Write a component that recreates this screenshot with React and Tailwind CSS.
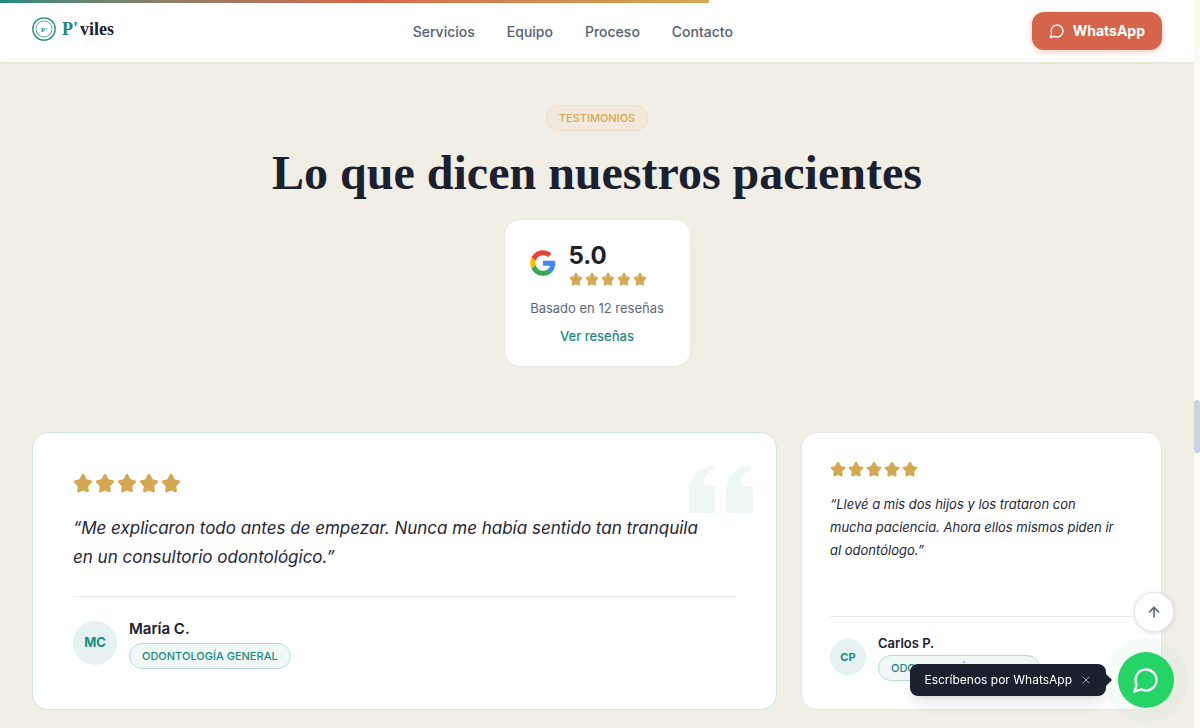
import React from "react";
import { ArrowUp, X } from "lucide-react";

const NAV = [
  { label: "Servicios", href: "#servicios" },
  { label: "Equipo", href: "#equipo" },
  { label: "Proceso", href: "#proceso" },
  { label: "Contacto", href: "#contacto" },
];

function ChatIcon({ className }) {
  return (
    <svg viewBox="0 0 24 24" fill="none" stroke="currentColor" strokeWidth="2" strokeLinecap="round" strokeLinejoin="round" className={className} aria-hidden="true">
      <path d="M7.9 20A9 9 0 1 0 4 16.1L2 22Z" />
    </svg>
  );
}

function Stars({ size }) {
  return (
    <div role="img" aria-label="5 de 5 estrellas" className="flex gap-0.5 text-[#d4a853]">
      {[0, 1, 2, 3, 4].map((n) => (
        <svg key={n} viewBox="0 0 24 24" fill="currentColor" stroke="currentColor" strokeWidth="2" strokeLinecap="round" strokeLinejoin="round" className={size} aria-hidden="true">
          <path d="M11.525 2.295a.53.53 0 0 1 .95 0l2.81 5.4a2.123 2.123 0 0 0 1.595 1.16l4.666.8a.53.53 0 0 1 .294.904l-3.9 4.2a2.123 2.123 0 0 0-.611 1.878l.682 4.95a.53.53 0 0 1-.771.56l-4.318-1.8a2.122 2.122 0 0 0-1.973 0L6.696 22.2a.53.53 0 0 1-.77-.56l.681-4.95a2.122 2.122 0 0 0-.611-1.879l-3.836-4.252a.53.53 0 0 1 .294-.906l4.597-.798a2.122 2.122 0 0 0 1.598-1.16z" />
        </svg>
      ))}
    </div>
  );
}

function GoogleLogo() {
  return (
    <svg viewBox="0 0 24 24" className="size-7 shrink-0" aria-hidden="true">
      <path fill="#4285F4" d="M22.56 12.25c0-.78-.07-1.53-.2-2.25H12v4.26h5.92c-.26 1.37-1.04 2.53-2.21 3.31v2.77h3.57c2.08-1.92 3.28-4.74 3.28-8.09z" />
      <path fill="#34A853" d="M12 23c2.97 0 5.46-.98 7.28-2.66l-3.57-2.77c-.98.66-2.23 1.06-3.71 1.06-2.86 0-5.29-1.93-6.16-4.53H2.18v2.84C3.99 20.53 7.7 23 12 23z" />
      <path fill="#FBBC05" d="M5.84 14.09c-.22-.66-.35-1.36-.35-2.09s.13-1.43.35-2.09V7.07H2.18C1.43 8.55 1 10.22 1 12s.43 3.45 1.18 4.93l3.66-2.84z" />
      <path fill="#EA4335" d="M12 5.38c1.62 0 3.06.56 4.21 1.64l3.15-3.15C17.45 2.09 14.97 1 12 1 7.7 1 3.99 3.47 2.18 7.07l3.66 2.84c.87-2.6 3.3-4.53 6.16-4.53z" />
    </svg>
  );
}

function Specialty({ children }) {
  return (
    <span className="flex h-[26px] items-center rounded-full border border-[#b5dcd8] bg-[#f0f8f7] px-3 text-[11px] font-medium whitespace-nowrap text-[#1a8a7d] uppercase">
      {children}
    </span>
  );
}

function Header() {
  return (
    <header className="flex h-[62px] items-center justify-between bg-white px-8 shadow-[0_1px_3px_rgba(26,32,46,0.08)]">
      <a href="#inicio" className="flex items-center gap-1.5 pb-1">
        <svg viewBox="0 0 24 24" className="size-6" fill="none" stroke="#1a8a7d" aria-hidden="true">
          <circle cx="12" cy="12" r="11.2" strokeWidth="1.3" />
          <circle cx="12" cy="12" r="8" strokeWidth="0.7" />
          <text x="12" y="14.5" textAnchor="middle" fill="#1a8a7d" stroke="none" className="font-['Liberation_Serif',serif] text-[7px] font-bold">P'</text>
        </svg>
        <span className="flex gap-0.5 font-['Liberation_Serif',serif] text-lg leading-6 font-bold text-[#1a202e]">
          <span className="text-[#1a8a7d]">P'</span>
          <span>viles</span>
        </span>
      </a>
      <nav className="flex gap-8 pt-0.5 text-sm font-medium text-[#566070]">
        {NAV.map((n) => (
          <a key={n.href} href={n.href}>{n.label}</a>
        ))}
      </nav>
      <a href="#whatsapp" className="flex h-[38px] items-center gap-2 rounded-xl bg-[#d4654a] px-[17px] text-sm font-bold text-white shadow-[0_2px_6px_rgba(212,101,74,0.3)]">
        <ChatIcon className="size-4" />
        WhatsApp
      </a>
    </header>
  );
}

function RatingCard() {
  return (
    <div className="mt-4 flex min-w-[187px] flex-col items-center rounded-2xl border border-[#e9e8e6] bg-white px-6 py-5">
      <div className="flex items-center gap-3 self-start">
        <GoogleLogo />
        <div>
          <p className="text-2xl leading-8 font-bold text-[#1a202e]">5.0</p>
          <Stars size="size-3.5" />
        </div>
      </div>
      <p className="mt-3 text-[13px] leading-5 text-[#5f6878]">Basado en 12 reseñas</p>
      <a href="#resenas" className="mt-2 text-[13px] leading-5 font-medium text-[#1a8a7d]">Ver reseñas</a>
    </div>
  );
}

function FeaturedReview() {
  return (
    <article className="relative rounded-2xl border border-[#cfe6e4] bg-white p-10">
      <svg viewBox="0 0 66 50" className="absolute top-8 right-[22px] h-[50px] w-[66px] text-[#eff7f6]" fill="currentColor" aria-hidden="true">
        <path d="M1 48V28C1 12 10 2 26 1V5C19 7 15 13 16 18C16 20 18 21 20 21H27V48Z" />
        <path d="M38 48V28C38 12 47 2 63 1V5C56 7 52 13 53 18C53 20 55 21 57 21H65V48Z" />
      </svg>
      <Stars size="size-5" />
      <p className="relative mt-[21px] pr-4 text-[17px] leading-[29px] text-[#1f2634] italic">
        “Me explicaron todo antes de empezar. Nunca me había sentido tan tranquila en un consultorio odontológico.”
      </p>
      <div className="mt-6 flex gap-3 border-t border-[#ebecee] pt-6">
        <span className="flex size-11 items-center justify-center rounded-full bg-[#e5f2f1] text-[13px] font-bold text-[#1a8a7d]">MC</span>
        <div>
          <p className="pb-1.5 text-[15px] leading-4 font-semibold text-[#1a202e]">María C.</p>
          <Specialty>Odontología general</Specialty>
        </div>
      </div>
    </article>
  );
}

function Review() {
  return (
    <article className="flex flex-col rounded-2xl border border-[#e6e8e8] bg-white p-7">
      <Stars size="size-4" />
      <p className="mt-4 pr-4 text-[13px] leading-[23px] text-[#1f2634] italic">
        “Llevé a mis dos hijos y los trataron con mucha paciencia. Ahora ellos mismos piden ir al odontólogo.”
      </p>
      <div className="mt-auto flex items-center gap-3 border-t border-[#ebecee] pt-4">
        <span className="flex size-9 items-center justify-center rounded-full bg-[#e5f2f1] text-[11px] font-bold text-[#1a8a7d]">CP</span>
        <div>
          <p className="pb-0.5 text-[13px] leading-5 font-semibold text-[#1a202e]">Carlos P.</p>
          <Specialty>Odontología general</Specialty>
        </div>
      </div>
    </article>
  );
}

function FloatingActions() {
  return (
    <div className="fixed right-[26px] bottom-5 flex flex-col items-end gap-5">
      <button type="button" aria-label="Volver arriba" className="flex size-10 items-center justify-center rounded-full border border-[#e2e5ea] bg-white text-[#5f6878] shadow-[0_1px_4px_rgba(26,32,46,0.15)]">
        <ArrowUp className="size-4" strokeWidth={2.5} />
      </button>
      <div className="flex items-center gap-3">
        <div className="relative flex h-8 items-center gap-2 rounded-lg bg-[#1a202e] px-3.5 text-xs text-white shadow-lg">
          Escríbenos por WhatsApp
          <button type="button" aria-label="Cerrar" className="flex size-3 items-center justify-center text-[#a3a8b1]">
            <X className="size-3" strokeWidth={2} />
          </button>
          <svg viewBox="0 0 6 12" className="absolute top-2.5 -right-1.5 h-3 w-1.5" fill="#1a202e" aria-hidden="true">
            <path d="M0 0L6 6L0 12Z" />
          </svg>
        </div>
        <a href="#whatsapp" aria-label="Abrir WhatsApp" className="flex size-14 items-center justify-center rounded-full bg-[#25d366] text-white shadow-[0_0_0_14px_rgba(37,211,102,0.04)]">
          <ChatIcon className="size-7" />
        </a>
      </div>
    </div>
  );
}

export default function App() {
  return (
    <div className="flex min-h-screen bg-[#f1eee6] font-[Inter,sans-serif]">
      <div className="min-w-0 flex-1">
        <div className="fixed inset-x-0 top-0 mr-1.5">
          <div className="h-[3px] w-[59.4%] bg-linear-to-r from-[#1a8a7d] via-[#d4654a] to-[#d4a853]" />
        </div>
        <Header />
        <main className="px-8 pt-[43px] pb-[18px]">
          <div className="flex flex-col items-center">
            <span className="flex h-[26px] items-center rounded-full border border-[#eedfcd] bg-[#f2e9dc] px-3 text-[11px] font-medium text-[#d4a853] uppercase">Testimonios</span>
            <h2 className="mt-3 text-center font-['Liberation_Serif',serif] text-5xl leading-[60px] font-bold text-[#1a202e]">Lo que dicen nuestros pacientes</h2>
            <RatingCard />
          </div>
          <div className="mt-[65px] grid grid-cols-[745fr_361fr] gap-6">
            <FeaturedReview />
            <Review />
          </div>
        </main>
      </div>
      <div className="flex w-1.5 flex-col bg-[#fcfaf5]">
        <div className="mt-[400px] h-[53px] rounded-full bg-[#cbd3df]" />
      </div>
      <FloatingActions />
    </div>
  );
}
